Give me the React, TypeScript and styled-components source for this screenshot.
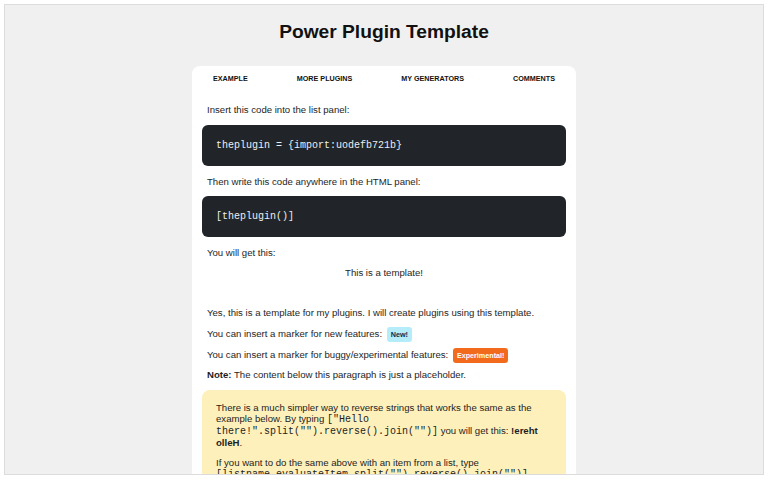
import React from "react";
import styled, { createGlobalStyle, css } from "styled-components";

const GlobalStyle = createGlobalStyle`
  html, body { margin: 0; padding: 0; background: #ffffff; }
  body { font-family: "Liberation Sans", Arial, sans-serif; color: #1e1e1e; }
  * { box-sizing: border-box; }
`;

const Frame = styled.div`
  margin: 4px 4px 0 4px;
  height: 471px;
  border: 1px solid #dcdcdc;
  background: #f0f0f0;
  overflow: hidden;
`;

const Title = styled.h1`
  margin: 16px 0 23px;
  font-size: 19.2px;
  line-height: 22px;
  font-weight: bold;
  text-align: center;
  color: #111;
`;

const Card = styled.div`
  width: 384px;
  margin: 0 auto;
  background: #ffffff;
  border-radius: 8px;
`;

const Nav = styled.nav`
  height: 26px;
  padding: 0 21px;
  display: flex;
  align-items: center;
  justify-content: space-between;
`;

const NavItem = styled.a`
  font-size: 7.2px;
  line-height: 10px;
  font-weight: bold;
  text-transform: uppercase;
  color: #111;
  text-decoration: none;
`;

const Content = styled.div`
  padding: 2.9px 10px 20px;
`;

const Para = styled.p<{ $center?: boolean; $gapAfter?: number }>`
  margin: 9.6px 5px;
  font-size: 9.6px;
  line-height: 11px;
  ${(p) => p.$center && css`text-align: center;`}
  ${(p) => p.$gapAfter !== undefined && css`margin-bottom: ${p.$gapAfter}px;`}
`;

const CodeBlock = styled.pre`
  margin: 0;
  padding: 14.5px 14px;
  background: #212529;
  color: #eceff1;
  border-radius: 6px;
  font-family: "Liberation Mono", "DejaVu Sans Mono", monospace;
  font-size: 10px;
  line-height: 12px;
`;

const Badge = styled.span<{ $variant: "new" | "experimental" }>`
  display: inline;
  padding: 3px 4px;
  margin-left: 2px;
  border-radius: 3px;
  font-size: 7.2px;
  line-height: 0;
  font-weight: bold;
  ${(p) =>
    p.$variant === "new"
      ? css`
          background: #b4ecfa;
          color: #0d2a4a;
        `
      : css`
          background: #f26b1d;
          color: #ffffff;
        `}
`;

const Callout = styled.div`
  background: #fdf0bb;
  border-radius: 8px;
  padding: 12.5px 14px;
`;

const CalloutPara = styled.p`
  margin: 0 0 9px;
  font-size: 9.6px;
  line-height: 11px;
  color: #1e1e1e;
`;

const InlineCode = styled.code`
  font-family: "Liberation Mono", "DejaVu Sans Mono", monospace;
  font-size: 10px;
  line-height: 11px;
`;

export default function App() {
  return (
    <>
      <GlobalStyle />
      <Frame>
        <Title>Power Plugin Template</Title>
        <Card>
          <Nav>
            <NavItem href="#">Example</NavItem>
            <NavItem href="#">More Plugins</NavItem>
            <NavItem href="#">My Generators</NavItem>
            <NavItem href="#">Comments</NavItem>
          </Nav>
          <Content>
            <Para>Insert this code into the list panel:</Para>
            <CodeBlock>theplugin = {"{import:uodefb721b}"}</CodeBlock>
            <Para>Then write this code anywhere in the HTML panel:</Para>
            <CodeBlock>[theplugin()]</CodeBlock>
            <Para>You will get this:</Para>
            <Para $center $gapAfter={29}>This is a template!</Para>
            <Para>Yes, this is a template for my plugins. I will create plugins using this template.</Para>
            <Para>
              You can insert a marker for new features: <Badge $variant="new">New!</Badge>
            </Para>
            <Para>
              You can insert a marker for buggy/experimental features:{" "}
              <Badge $variant="experimental">Experimental!</Badge>
            </Para>
            <Para>
              <b>Note:</b> The content below this paragraph is just a placeholder.
            </Para>
            <Callout>
              <CalloutPara>
                There is a much simpler way to reverse strings that works the same as the example below. By typing{" "}
                <InlineCode>["Hello there!".split("").reverse().join("")]</InlineCode> you will get this:{" "}
                <b>!ereht olleH</b>.
              </CalloutPara>
              <CalloutPara>
                If you want to do the same above with an item from a list, type{" "}
                <InlineCode>[listname.evaluateItem.split("").reverse().join("")]</InlineCode>
              </CalloutPara>
            </Callout>
          </Content>
        </Card>
      </Frame>
    </>
  );
}
